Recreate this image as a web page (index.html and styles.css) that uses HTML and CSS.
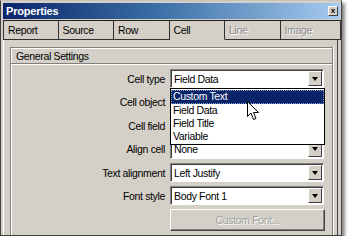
FILE: index.html
```html
<!DOCTYPE html>
<html>
<head>
<meta charset="utf-8">
<link rel="stylesheet" href="styles.css">
</head>
<body>
<div class="window">
  <div class="titlebar">
    <span class="title">Properties</span>
    <span class="close">x</span>
  </div>
  <div class="tabs">
    <div class="tab">Report</div>
    <div class="tab">Source</div>
    <div class="tab">Row</div>
    <div class="tab active">Cell</div>
    <div class="tab disabled">Line</div>
    <div class="tab disabled last">Image</div>
  </div>
  <div class="body">
    <div class="group">
      <div class="group-head">General Settings</div>
      <div class="rows">
        <div class="row">
          <span class="label">Cell type</span>
          <div class="select open">
            <span class="value">Field Data</span>
            <span class="arrow"></span>
            <div class="list">
              <div class="item selected">Custom Text</div>
              <div class="item">Field Data</div>
              <div class="item">Field Title</div>
              <div class="item">Variable</div>
            </div>
            <svg class="cursor" width="13" height="20" viewBox="0 0 13 20">
              <path d="M0.5 0.5 L0.5 15.5 L4 12 L6.5 18.5 L9 17.5 L6.5 11.5 L11.5 11.5 Z" fill="#fff" stroke="#000" stroke-width="1" stroke-linejoin="miter"/>
            </svg>
          </div>
        </div>
        <div class="row">
          <span class="label">Cell object</span>
          <div class="select"><span class="value"></span><span class="arrow"></span></div>
        </div>
        <div class="row">
          <span class="label">Cell field</span>
          <div class="select"><span class="value"></span><span class="arrow"></span></div>
        </div>
        <div class="row">
          <span class="label">Align cell</span>
          <div class="select"><span class="value">None</span><span class="arrow"></span></div>
        </div>
        <div class="row">
          <span class="label">Text alignment</span>
          <div class="select"><span class="value">Left Justify</span><span class="arrow"></span></div>
        </div>
        <div class="row">
          <span class="label">Font style</span>
          <div class="select"><span class="value">Body Font 1</span><span class="arrow"></span></div>
        </div>
      </div>
      <div class="btn-row">
        <div class="button">Custom Font...</div>
      </div>
    </div>
  </div>
</div>
</body>
</html>
```

FILE: styles.css
```css
html, body {
  margin: 0;
  padding: 0;
  background: #ffffff;
}
body {
  font-family: "Liberation Sans", Arial, sans-serif;
  font-size: 10.5px;
  letter-spacing: -0.35px;
  color: #000;
}
.window {
  width: 342px;
  height: 236px;
  box-sizing: border-box;
  background: #d4d0c8;
  border: 1px solid #404040;
  border-top-color: #c8c4bc;
  padding: 2px 1px 0 2px;
  box-shadow: 3px 3px 3px rgba(0,0,0,0.45);
  display: flex;
  flex-direction: column;
}
.titlebar {
  height: 16px;
  background: linear-gradient(to right, #0a246a 0%, #3a6ea5 45%, #a6caf0 100%);
  display: flex;
  align-items: center;
  justify-content: space-between;
  padding: 0 2px 0 3px;
  width: 337px;
  box-sizing: border-box;
}
.title {
  color: #fff;
  font-weight: bold;
  font-size: 11px;
  letter-spacing: -0.2px;
}
.close {
  width: 8px;
  height: 8px;
  background: #d4d0c8;
  border: 1px solid #404040;
  border-top-color: #fff;
  border-left-color: #fff;
  font-size: 8px;
  line-height: 7px;
  text-align: center;
  font-weight: bold;
  letter-spacing: 0;
  color: #000;
}
.tabs {
  margin-top: 1px;
  height: 20px;
  display: flex;
  width: 338px;
  border-top: 1px solid #202020;
  box-sizing: border-box;
}
.tab {
  width: 55.5px;
  box-sizing: border-box;
  border-right: 1px solid #303030;
  border-bottom: 1px solid #303030;
  padding-left: 4px;
  display: flex;
  align-items: center;
}
.tab:first-child {
  border-left: 1px solid #303030;
}
.tab.active {
  border-bottom-color: transparent;
}
.tab.disabled {
  color: #8a8a8a;
  text-shadow: 1px 1px 0 #fff;
}
.tab.last {
  width: 60.5px;
}
.body {
  flex: 1;
  border-left: 1px solid #fff;
  border-right: 1px solid #404040;
  margin-right: 2px;
  padding: 7px 4px 0 6px;
  display: flex;
}
.group {
  flex: 1;
  border: 1px solid #808080;
  border-bottom: none;
  box-shadow: inset 1px 1px 0 #fff, 1px 0 0 #fff;
  display: flex;
  flex-direction: column;
}
.group-head {
  height: 15px;
  line-height: 16px;
  padding-left: 5px;
  border-bottom: 1px solid #808080;
  box-shadow: 0 1px 0 #fff;
}
.rows {
  padding-top: 3.3px;
  display: flex;
  flex-direction: column;
}
.row {
  height: 23.4px;
  display: flex;
  align-items: center;
}
.label {
  width: 154px;
  text-align: right;
  padding-right: 5px;
}
.select {
  position: relative;
  width: 154px;
  height: 19px;
  box-sizing: border-box;
  background: #fff;
  border: 1px solid #fff;
  border-top-color: #808080;
  border-left-color: #808080;
  box-shadow: inset 1px 1px 0 #404040;
  display: flex;
  align-items: center;
  justify-content: space-between;
}
.value {
  padding-left: 3px;
}
.arrow {
  width: 14px;
  height: 15px;
  margin-right: 1px;
  box-sizing: border-box;
  background: #d4d0c8;
  border: 1px solid #404040;
  border-top-color: #fff;
  border-left-color: #fff;
  display: flex;
  align-items: center;
  justify-content: center;
}
.arrow::after {
  content: "";
  border-left: 3.5px solid transparent;
  border-right: 3.5px solid transparent;
  border-top: 4px solid #000;
}
.list {
  position: absolute;
  left: -1px;
  top: 18px;
  width: 155px;
  box-sizing: border-box;
  background: #fff;
  border: 1px solid #000;
  padding: 1px 0;
  z-index: 5;
}
.item {
  height: 13.2px;
  line-height: 13px;
  padding-left: 2px;
}
.item.selected {
  background: #0a246a;
  color: #fff;
  outline: 1px dotted #8a9fd0;
  outline-offset: -1px;
}
.cursor {
  position: absolute;
  left: 76px;
  top: 31px;
  z-index: 6;
}
.btn-row {
  padding-left: 159px;
  padding-top: 1.3px;
}
.button {
  width: 155px;
  height: 22px;
  box-sizing: border-box;
  border: 1px solid #404040;
  border-top-color: #fff;
  border-left-color: #fff;
  box-shadow: inset -1px -1px 0 #808080;
  display: flex;
  align-items: center;
  justify-content: center;
  color: #a0a0a0;
  text-shadow: 1px 1px 0 #fff;
}
```
